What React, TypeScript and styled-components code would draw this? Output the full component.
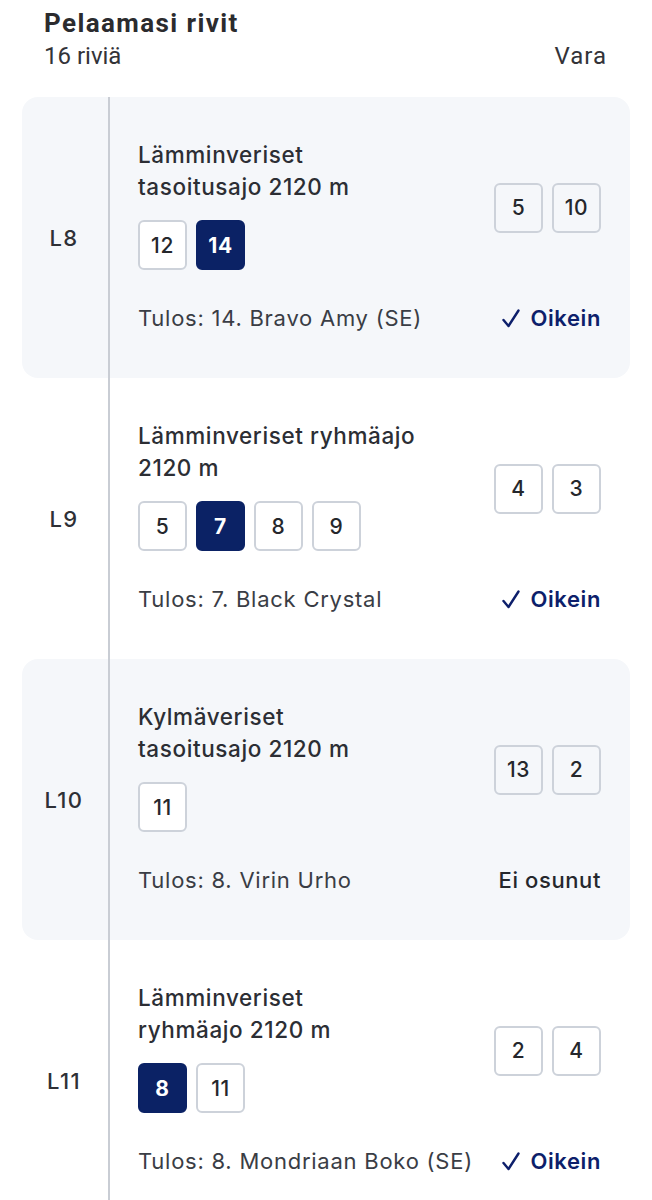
import styled, { createGlobalStyle } from 'styled-components'

const GlobalStyle = createGlobalStyle`
  body {
    margin: 0;
    background: #ffffff;
    font-family: Inter, 'Noto Sans', sans-serif;
    color: #2b2d33;
  }
`

const Page = styled.div`
  padding: 8px 22px 0;
`

const Header = styled.header`
  padding: 0 23px 0 22px;
  margin-bottom: 25px;
`

const Title = styled.h2`
  margin: 0;
  font-family: Roboto, 'Liberation Sans', sans-serif;
  font-weight: 700;
  font-size: 26px;
  line-height: 30px;
  letter-spacing: 1.4px;
  color: #2b2b2e;
`

const SubRow = styled.div`
  display: flex;
  justify-content: space-between;
  align-items: center;
  margin-top: 2px;
  font-family: Roboto, 'Liberation Sans', sans-serif;
  font-size: 24px;
  line-height: 32px;
  color: #333338;

  span:last-child {
    letter-spacing: 1px;
  }
`

const Row = styled.section<{ $shaded: boolean }>`
  display: grid;
  grid-template-columns: 88px 1fr;
  background: ${(p) => (p.$shaded ? '#f5f7fa' : 'transparent')};
  border-radius: 16px;
`

const Leg = styled.div`
  display: flex;
  align-items: center;
  justify-content: center;
  border-right: 2px solid #c9cdd4;
  font-size: 22px;
  font-weight: 500;
  letter-spacing: 1.4px;
  color: #2e3036;
  padding-right: 2px;
`

const Body = styled.div`
  padding: 42px 29px 46px 28px;
`

const Top = styled.div`
  display: flex;
  align-items: center;
  justify-content: space-between;
`

const RaceName = styled.div`
  font-size: 22.5px;
  line-height: 32px;
  font-weight: 500;
  letter-spacing: 0.6px;
  color: #2c2e34;
`

const Chips = styled.div<{ $top?: number }>`
  display: flex;
  gap: 9px;
  margin-top: ${(p) => p.$top ?? 0}px;
`

const Chip = styled.div<{ $selected?: boolean; $plain?: boolean }>`
  box-sizing: border-box;
  width: 49px;
  height: 50px;
  display: flex;
  align-items: center;
  justify-content: center;
  border-radius: 6px;
  border: 2px solid ${(p) => (p.$selected ? '#0b2265' : '#cdd2da')};
  background: ${(p) => (p.$selected ? '#0b2265' : p.$plain ? 'transparent' : '#ffffff')};
  color: ${(p) => (p.$selected ? '#ffffff' : '#25272c')};
  font-size: 21px;
  letter-spacing: 0.6px;
  font-weight: ${(p) => (p.$selected ? 700 : 500)};
`

const Result = styled.div`
  display: flex;
  justify-content: space-between;
  align-items: center;
  margin-top: 34px;
  line-height: 28px;
`

const Winner = styled.span`
  font-size: 22px;
  letter-spacing: 0.75px;
  color: #3a3d45;
`

const Status = styled.span<{ $hit: boolean }>`
  display: flex;
  align-items: center;
  gap: 10px;
  font-size: 22px;
  letter-spacing: 0.6px;
  font-weight: ${(p) => (p.$hit ? 600 : 500)};
  color: ${(p) => (p.$hit ? '#0d1f6b' : '#25272c')};
`

const Check = () => (
  <svg width="18" height="19" viewBox="0 0 18 19" fill="none">
    <path d="M1.5 11 L6.5 17 L16.5 1.5" stroke="#0d1f6b" strokeWidth="2.4" strokeLinecap="round" strokeLinejoin="round" />
  </svg>
)

type LegData = {
  leg: string
  name: string[]
  picks: number[]
  selected: number
  reserves: number[]
  result: string
  hit: boolean
}

const legs: LegData[] = [
  {
    leg: 'L8',
    name: ['Lämminveriset', 'tasoitusajo 2120 m'],
    picks: [12, 14],
    selected: 14,
    reserves: [5, 10],
    result: 'Tulos: 14. Bravo Amy (SE)',
    hit: true
  },
  {
    leg: 'L9',
    name: ['Lämminveriset ryhmäajo', '2120 m'],
    picks: [5, 7, 8, 9],
    selected: 7,
    reserves: [4, 3],
    result: 'Tulos: 7. Black Crystal',
    hit: true
  },
  {
    leg: 'L10',
    name: ['Kylmäveriset', 'tasoitusajo 2120 m'],
    picks: [11],
    selected: -1,
    reserves: [13, 2],
    result: 'Tulos: 8. Virin Urho',
    hit: false
  },
  {
    leg: 'L11',
    name: ['Lämminveriset', 'ryhmäajo 2120 m'],
    picks: [8, 11],
    selected: 8,
    reserves: [2, 4],
    result: 'Tulos: 8. Mondriaan Boko (SE)',
    hit: true
  }
]

export default function App() {
  return (
    <>
      <GlobalStyle />
      <Page>
        <Header>
          <Title>Pelaamasi rivit</Title>
          <SubRow>
            <span>16 riviä</span>
            <span>Vara</span>
          </SubRow>
        </Header>
        {legs.map((l, i) => (
          <Row key={l.leg} $shaded={i % 2 === 0}>
            <Leg>{l.leg}</Leg>
            <Body>
              <Top>
                <div>
                  <RaceName>
                    {l.name.map((line) => (
                      <div key={line}>{line}</div>
                    ))}
                  </RaceName>
                  <Chips $top={17}>
                    {l.picks.map((n) => (
                      <Chip key={n} $selected={n === l.selected}>
                        {n}
                      </Chip>
                    ))}
                  </Chips>
                </div>
                <Chips $top={6}>
                  {l.reserves.map((n) => (
                    <Chip key={n} $plain>
                      {n}
                    </Chip>
                  ))}
                </Chips>
              </Top>
              <Result>
                <Winner>{l.result}</Winner>
                <Status $hit={l.hit}>
                  {l.hit && <Check />}
                  {l.hit ? 'Oikein' : 'Ei osunut'}
                </Status>
              </Result>
            </Body>
          </Row>
        ))}
      </Page>
    </>
  )
}
